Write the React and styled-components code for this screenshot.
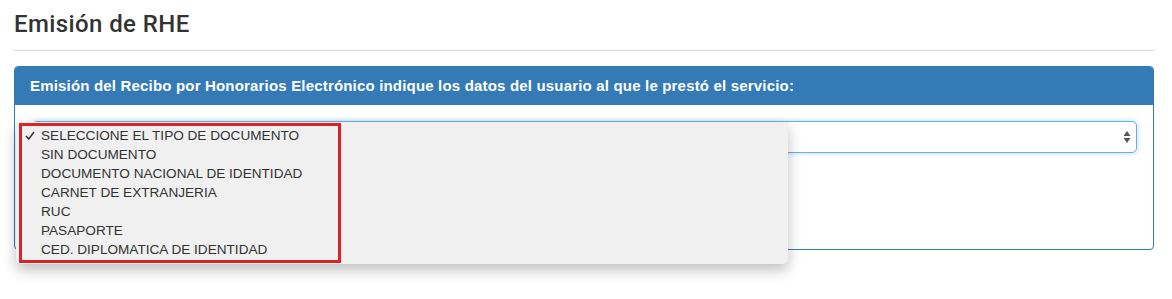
import React from 'react';
import styled, { createGlobalStyle } from 'styled-components';

const GlobalStyle = createGlobalStyle`
  html, body {
    margin: 0;
    padding: 0;
    background: #fff;
    font-family: "Liberation Sans", Arial, sans-serif;
    color: #333;
  }
`;

const options = [
  'SELECCIONE EL TIPO DE DOCUMENTO',
  'SIN DOCUMENTO',
  'DOCUMENTO NACIONAL DE IDENTIDAD',
  'CARNET DE EXTRANJERIA',
  'RUC',
  'PASAPORTE',
  'CED. DIPLOMATICA DE IDENTIDAD',
];

export default function App() {
  return (
    <Page>
      <GlobalStyle />
      <Title>Emisión de RHE</Title>
      <Rule />
      <Panel>
        <PanelHeading>
          Emisión del Recibo por Honorarios Electrónico indique los datos del usuario al que le prestó el servicio:
        </PanelHeading>
        <PanelBody>
          <SelectWrap>
            <SelectBox>
              <Arrows viewBox="0 0 8 14" width="8" height="14">
                <path d="M4 1 L7.5 6 H0.5 Z" fill="#555" />
                <path d="M4 13 L7.5 8 H0.5 Z" fill="#555" />
              </Arrows>
            </SelectBox>
            <Dropdown>
              {options.map((o, i) => (
                <Option key={o}>
                  <Check>
                    {i === 0 && (
                      <svg viewBox="0 0 10 9" width="10" height="9">
                        <path d="M1 5 L3.8 8 L9 1" fill="none" stroke="#333" strokeWidth="1.5" />
                      </svg>
                    )}
                  </Check>
                  {o}
                </Option>
              ))}
              <Highlight />
            </Dropdown>
          </SelectWrap>
        </PanelBody>
      </Panel>
    </Page>
  );
}

const Page = styled.div`
  box-sizing: border-box;
  min-height: 299px;
  padding: 9px 18px 0 14px;
`;

const Title = styled.h1`
  margin: 0;
  font-family: Roboto, "Liberation Sans", Arial, sans-serif;
  font-size: 24px;
  font-weight: 500;
  line-height: 30px;
  color: #333;
  letter-spacing: 0.4px;
`;

const Rule = styled.div`
  height: 1px;
  background: #d9d9d9;
  margin: 11px 0 15px;
`;

const Panel = styled.div`
  border: 1px solid #337ab7;
  border-radius: 4px;
`;

const PanelHeading = styled.div`
  background: #337ab7;
  color: #fff;
  font-weight: bold;
  font-size: 15px;
  letter-spacing: 0.18px;
  height: 38px;
  line-height: 38px;
  padding: 0 15px;
  border-radius: 3px 3px 0 0;
  white-space: nowrap;
`;

const PanelBody = styled.div`
  padding: 16px 16px 0 17px;
  height: 128px;
`;

const SelectWrap = styled.div`
  position: relative;
`;

const SelectBox = styled.div`
  height: 30px;
  border: 1px solid #66afe9;
  border-radius: 5px;
  background: #fff;
  box-shadow: 0 0 5px rgba(102, 175, 233, 0.5);
  display: flex;
  align-items: center;
  justify-content: flex-end;
  padding-right: 5px;
`;

const Arrows = styled.svg`
  display: block;
`;

const Dropdown = styled.div`
  position: absolute;
  z-index: 2;
  left: -16px;
  top: 1px;
  width: 772px;
  box-sizing: border-box;
  padding: 4px 0 5px;
  background: #f0f0f0;
  border-radius: 0 0 5px 5px;
  box-shadow: 0 6px 14px rgba(0, 0, 0, 0.25);
`;

const Option = styled.div`
  display: flex;
  align-items: center;
  height: 19px;
  font-size: 13.6px;
  color: #333;
  white-space: nowrap;
`;

const Check = styled.span`
  display: flex;
  align-items: center;
  width: 25px;
  padding-left: 9px;
  box-sizing: border-box;
  flex: none;
`;

const Highlight = styled.div`
  position: absolute;
  left: 3px;
  top: 1px;
  width: 322px;
  height: 140px;
  box-sizing: border-box;
  border: 3px solid #dc2428;
  pointer-events: none;
`;
